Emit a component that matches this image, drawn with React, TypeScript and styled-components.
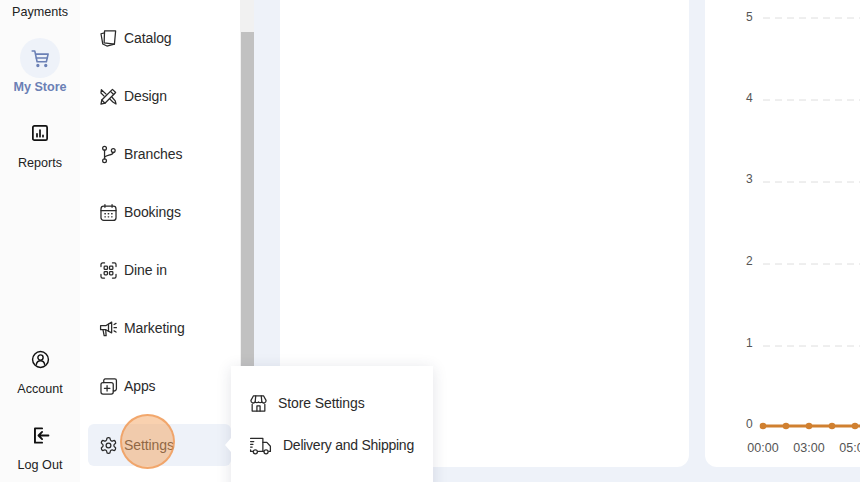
import React from "react";
import styled, { createGlobalStyle } from "styled-components";

const Global = createGlobalStyle`
  html, body {
    margin: 0;
    height: 100%;
    overflow: hidden;
    background: #eef2f9;
  }
  #root {
    height: 100%;
  }
`;

const Page = styled.div`
  position: relative;
  display: flex;
  width: 860px;
  height: 482px;
  overflow: hidden;
  font-family: "Liberation Sans", Arial, sans-serif;
  color: #222;
`;

const Rail = styled.nav`
  flex: 0 0 80px;
  display: flex;
  flex-direction: column;
  justify-content: space-between;
  padding: 3px 0 8px;
  box-sizing: border-box;
  background: #fbfbfb;
`;

const RailGroup = styled.div`
  display: flex;
  flex-direction: column;
  gap: 18px;
`;

const RailItem = styled.div`
  display: flex;
  flex-direction: column;
  align-items: center;
`;

const RailIcon = styled.div<{ $active?: boolean }>`
  width: 40px;
  height: 40px;
  padding-bottom: ${(p) => (p.$active ? 0 : 2)}px;
  box-sizing: border-box;
  border-radius: 50%;
  display: flex;
  align-items: center;
  justify-content: center;
  color: ${(p) => (p.$active ? "#6b80b5" : "#111")};
  background: ${(p) => (p.$active ? "#eef2f9" : "transparent")};
`;

const RailLabel = styled.span<{ $active?: boolean }>`
  font-size: 12.6px;
  line-height: 18px;
  font-weight: ${(p) => (p.$active ? 700 : 400)};
  color: ${(p) => (p.$active ? "#6b80b5" : "#222")};
`;

const CutLabel = styled(RailLabel)`
  margin-bottom: -1px;
`;

const SubNav = styled.div`
  flex: 0 0 160px;
  display: flex;
  flex-direction: column;
  gap: 16px;
  padding: 17px 9px 0 8px;
  box-sizing: border-box;
  background: #fff;
`;

const SubRow = styled.div<{ $active?: boolean }>`
  flex: 0 0 42px;
  display: flex;
  align-items: center;
  gap: 6px;
  padding-left: 11px;
  margin-top: ${(p) => (p.$active ? 1 : 0)}px;
  border-radius: 6px;
  font-size: 14px;
  letter-spacing: -0.1px;
  color: #2a2a2a;
  background: ${(p) => (p.$active ? "#eef2f9" : "transparent")};
`;

const Track = styled.div`
  flex: 0 0 14px;
  padding: 32px 0 0 1px;
  box-sizing: border-box;
  background: #f1f1f1;
`;

const Thumb = styled.div`
  height: 100%;
  background: #c1c1c1;
`;

const Main = styled.main`
  flex: 1;
  display: flex;
  gap: 16px;
  padding: 0 0 15px 26px;
  background: #eef2f9;
`;

const Panel = styled.section`
  flex: 0 0 409px;
  background: #fff;
  border-radius: 0 0 12px 12px;
`;

const ChartCard = styled.section`
  flex: 1;
  overflow: hidden;
  background: #fff;
  border-radius: 0 0 0 12px;
`;

const Popover = styled.div`
  position: absolute;
  left: 231px;
  top: 366px;
  width: 202px;
  height: 130px;
  display: flex;
  flex-direction: column;
  padding-top: 16px;
  box-sizing: border-box;
  background: #fff;
  box-shadow: 0 2px 14px rgba(40, 50, 80, 0.13);
  &::before {
    content: "";
    position: absolute;
    left: -6px;
    top: 72px;
    border-style: solid;
    border-width: 7px 6px 7px 0;
    border-color: transparent #fff transparent transparent;
  }
`;

const PopRow = styled.div<{ $gap: number; $track: number }>`
  flex: 0 0 42px;
  display: flex;
  align-items: center;
  gap: ${(p) => p.$gap}px;
  padding-left: 18px;
  font-size: 14px;
  letter-spacing: ${(p) => p.$track}px;
  color: #2a2a2a;
`;

const ClickMark = styled.div`
  position: absolute;
  left: 120px;
  top: 414px;
  width: 55px;
  height: 55px;
  box-sizing: border-box;
  border-radius: 50%;
  background: rgba(244, 164, 96, 0.5);
  border: 2px solid rgba(240, 150, 80, 0.7);
`;

const Glyph = styled.svg`
  flex: none;
  fill: none;
  stroke: currentColor;
  stroke-linecap: round;
  stroke-linejoin: round;
`;

const Icon = ({
  size = 19,
  w = 1.6,
  children,
  box = "0 0 24 24",
  width,
}: {
  size?: number;
  w?: number;
  children: React.ReactNode;
  box?: string;
  width?: number;
}) => (
  <Glyph width={width ?? size} height={size} viewBox={box} strokeWidth={w}>
    {children}
  </Glyph>
);

const CartIcon = () => (
  <Icon size={21} w={1.8}>
    <path d="M2.500 3.500h3l2.600 12.200h10.600l2-8.700H6.200" />
    <path d="M7.200 11.500h12.600" />
    <circle cx="9" cy="20" r="1" fill="currentColor" />
    <circle cx="18" cy="20" r="1" fill="currentColor" />
  </Icon>
);

const ReportsIcon = () => (
  <Icon size={18} w={2.3}>
    <rect x="2.500" y="2.500" width="19" height="19" rx="2" />
    <path d="M8 17v-4M12 17V8M16 17v-2" />
  </Icon>
);

const AccountIcon = () => (
  <Icon size={19} w={1.8}>
    <circle cx="12" cy="12" r="10" />
    <circle cx="12" cy="9.500" r="3.300" />
    <path d="M6.800 18c.6-3 2.600-4.400 5.200-4.400s4.600 1.400 5.200 4.400" />
  </Icon>
);

const LogOutIcon = () => (
  <Icon size={19} w={2.4}>
    <path d="M14 3H5v18h9" />
    <path d="M22 12H10M14 7.500 9.500 12l4.500 4.500" />
  </Icon>
);

const CatalogIcon = () => (
  <Icon>
    <path d="M7 2.500h14l-1.500 16.500-13-1.500z" />
    <path d="M7 5 2.500 6l2.300 13 5.200 2.500 9.500-2.500" />
  </Icon>
);

const DesignIcon = () => (
  <Icon>
    <path d="M2.500 21.500 3.500 16.500 17 3l4 4L7.500 20.500z" />
    <path d="M14.500 5.500l4 4M3.500 16.500l4 4" />
    <path d="M9 9 3 3.500 2.500 7.500 6.500 11.500M13.500 15l4 4 4 2.500-1-4-4-4.500" />
  </Icon>
);

const BranchIcon = () => (
  <Icon>
    <circle cx="7" cy="4" r="2.400" />
    <circle cx="7" cy="20" r="2.400" />
    <circle cx="18" cy="7" r="2.400" />
    <path d="M7 6.400v11.200M18 9.400c0 4-11 3-11 7" />
  </Icon>
);

const BookingIcon = () => (
  <Icon>
    <rect x="2.500" y="4" width="19" height="18" rx="3.500" />
    <path d="M2.500 9.500h19M7.500 2v3.500M16.500 2v3.500" />
    <path d="M7.500 13.500h.5M11.700 13.500h.5M16 13.500h.5M7.500 17.500h.5M11.700 17.500h.5M16 17.500h.5" strokeWidth="1.800" />
  </Icon>
);

const DineIcon = () => (
  <Icon>
    <path d="M2.500 7V4.500a2 2 0 0 1 2-2H7M17 2.500h2.500a2 2 0 0 1 2 2V7M21.500 17v2.500a2 2 0 0 1-2 2H17M7 21.500H4.500a2 2 0 0 1-2-2V17" />
    <rect x="6.500" y="6.500" width="4.200" height="4.200" rx="1" />
    <rect x="13.300" y="6.500" width="4.200" height="4.200" rx="1" />
    <rect x="6.500" y="13.300" width="4.200" height="4.200" rx="1" />
    <rect x="13.300" y="13.300" width="4.200" height="4.200" rx="1" />
  </Icon>
);

const MegaphoneIcon = () => (
  <Icon>
    <path d="M2 8.500h6.500L16 4v13.500l-7.500-4H2z" />
    <path d="M5 13.500 6.500 21h2.500l-.5-7.500M12 6.500v9" />
    <path d="M19 7l2.500-1.500M19 11h3M19 15l2.500 1.500" />
  </Icon>
);

const AppsIcon = () => (
  <Icon>
    <rect x="2.500" y="7" width="15.500" height="14.500" rx="2.500" />
    <path d="M6 7V5a2 2 0 0 1 2-2.500h12a2 2 0 0 1 2 2V15a3 3 0 0 1-4 2.500" />
    <path d="M10.200 10.800v7M6.800 14.300h7" />
  </Icon>
);

const GearIcon = () => (
  <Icon>
    <path d="M12.220 2h-.44a2 2 0 0 0-2 2v.18a2 2 0 0 1-1 1.730l-.43.250a2 2 0 0 1-2 0l-.15-.080a2 2 0 0 0-2.730.730l-.220.380a2 2 0 0 0 .730 2.730l.150.100a2 2 0 0 1 1 1.720v.510a2 2 0 0 1-1 1.740l-.150.090a2 2 0 0 0-.730 2.730l.220.380a2 2 0 0 0 2.730.730l.150-.080a2 2 0 0 1 2 0l.430.250a2 2 0 0 1 1 1.730V20a2 2 0 0 0 2 2h.440a2 2 0 0 0 2-2v-.180a2 2 0 0 1 1-1.730l.430-.250a2 2 0 0 1 2 0l.150.080a2 2 0 0 0 2.730-.730l.220-.390a2 2 0 0 0-.730-2.730l-.150-.080a2 2 0 0 1-1-1.740v-.500a2 2 0 0 1 1-1.740l.150-.090a2 2 0 0 0 .730-2.730l-.220-.380a2 2 0 0 0-2.730-.730l-.150.080a2 2 0 0 1-2 0l-.430-.250a2 2 0 0 1-1-1.730V4a2 2 0 0 0-2-2z" />
    <circle cx="12" cy="12" r="3" />
  </Icon>
);

const StoreIcon = () => (
  <Icon>
    <path d="M4 13v8.500h16V13" />
    <path d="M5.500 2.500h13l3 5.500a2.900 2.900 0 0 1-5.300 2 2.900 2.900 0 0 1-4.200 0 2.900 2.900 0 0 1-4.200 0A2.900 2.900 0 0 1 2.500 8z" />
    <path d="M8.500 2.500 7.800 10M15.500 2.500l.7 7.500M10 21.500V15h4v6.500" />
  </Icon>
);

const TruckIcon = () => (
  <Icon size={19} width={23} box="0 0 29 24">
    <path d="M2 3h15.500v16.500H12M4.500 19.500H2v-2" />
    <path d="M17.500 8h5l4.500 5v6.500h-2M17.500 19.500h1" />
    <circle cx="8" cy="20" r="2.600" />
    <circle cx="21.500" cy="20" r="2.600" />
    <path d="M2 7h4M2 10.500h3M2 14h2" />
  </Icon>
);

const menu = [
  { label: "Catalog", icon: <CatalogIcon /> },
  { label: "Design", icon: <DesignIcon /> },
  { label: "Branches", icon: <BranchIcon /> },
  { label: "Bookings", icon: <BookingIcon /> },
  { label: "Dine in", icon: <DineIcon /> },
  { label: "Marketing", icon: <MegaphoneIcon /> },
  { label: "Apps", icon: <AppsIcon /> },
  { label: "Settings", icon: <GearIcon />, active: true },
];

const yTicks = [
  { label: "5", textY: 21, lineY: 18 },
  { label: "4", textY: 102, lineY: 100 },
  { label: "3", textY: 183, lineY: 182 },
  { label: "2", textY: 265, lineY: 264 },
  { label: "1", textY: 347, lineY: 346 },
  { label: "0", textY: 428 },
];

const xPoints = [58, 81, 104, 127, 150];
const xLabels = [
  { label: "00:00", x: 58 },
  { label: "03:00", x: 104 },
  { label: "05:00", x: 150 },
];

// 차트 좌표는 카드 왼쪽 위 기준
const Chart = () => (
  <svg width="155" height="467" viewBox="0 0 155 467">
    {yTicks.map((t) => (
      <g key={t.label}>
        <text x="41" y={t.textY} fontSize="12" fill="#555" fontFamily="Liberation Sans">
          {t.label}
        </text>
        {t.lineY && (
          <line x1="58" x2="155" y1={t.lineY} y2={t.lineY} stroke="#dedede" strokeDasharray="7 5" />
        )}
      </g>
    ))}
    <line x1="55" x2="155" y1="426" y2="426" stroke="#d08030" strokeWidth="3" />
    {xPoints.map((x) => (
      <circle key={x} cx={x} cy="426" r="3.300" fill="#d08030" />
    ))}
    {xLabels.map((l) => (
      <text key={l.label} x={l.x} y="452" fontSize="12.500" textAnchor="middle" fill="#555" fontFamily="Liberation Sans">
        {l.label}
      </text>
    ))}
  </svg>
);

const App = () => (
  <Page>
    <Global />
    <Rail>
      <RailGroup>
        <RailItem>
          <CutLabel>Payments</CutLabel>
        </RailItem>
        <RailItem>
          <RailIcon $active>
            <CartIcon />
          </RailIcon>
          <RailLabel $active>My Store</RailLabel>
        </RailItem>
        <RailItem>
          <RailIcon>
            <ReportsIcon />
          </RailIcon>
          <RailLabel>Reports</RailLabel>
        </RailItem>
      </RailGroup>
      <RailGroup>
        <RailItem>
          <RailIcon>
            <AccountIcon />
          </RailIcon>
          <RailLabel>Account</RailLabel>
        </RailItem>
        <RailItem>
          <RailIcon>
            <LogOutIcon />
          </RailIcon>
          <RailLabel>Log Out</RailLabel>
        </RailItem>
      </RailGroup>
    </Rail>
    <SubNav>
      {menu.map((m) => (
        <SubRow key={m.label} $active={m.active}>
          {m.icon}
          {m.label}
        </SubRow>
      ))}
    </SubNav>
    <Track>
      <Thumb />
    </Track>
    <Main>
      <Panel />
      <ChartCard>
        <Chart />
      </ChartCard>
    </Main>
    <Popover>
      <PopRow $gap={10} $track={-0.1}>
        <StoreIcon />
        Store Settings
      </PopRow>
      <PopRow $gap={11} $track={-0.25}>
        <TruckIcon />
        Delivery and Shipping
      </PopRow>
    </Popover>
    <ClickMark />
  </Page>
);

export default App;
